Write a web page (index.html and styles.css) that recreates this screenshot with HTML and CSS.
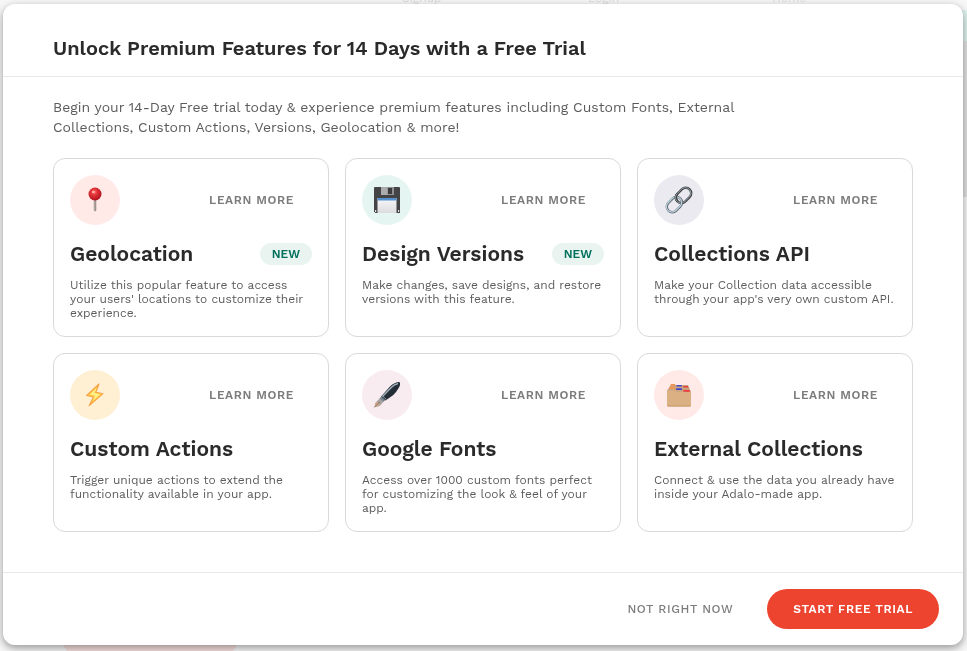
FILE: index.html
```html
<!DOCTYPE html>
<html lang="en">
<head>
<meta charset="utf-8">
<meta name="viewport" content="width=device-width, initial-scale=1">
<title>Free Trial</title>
<link rel="stylesheet" href="styles.css">
</head>
<body>
<div class="canvas" aria-hidden="true">
  <span class="screen-name screen-signup">Signup</span>
  <span class="screen-name screen-login">Login</span>
  <span class="screen-name screen-home">Home</span>
  <span class="canvas-mint"></span>
  <span class="canvas-side"></span>
  <span class="canvas-pill"></span>
</div>
<main class="modal" role="dialog" aria-labelledby="modal-title">
  <header class="modal-header">
    <h1 id="modal-title">Unlock Premium Features for 14 Days with a Free Trial</h1>
  </header>
  <div class="modal-body">
    <p class="intro">Begin your 14-Day Free trial today &amp; experience premium features including Custom Fonts, External Collections, Custom Actions, Versions, Geolocation &amp; more!</p>
    <div class="cards">
      <article class="card">
        <div class="card-top">
          <span class="icon icon-red">
            <svg viewBox="0 0 30 30" aria-hidden="true">
              <defs>
                <radialGradient id="ball" cx=".42" cy=".35" r=".65"><stop offset="0" stop-color="#ff8078"/><stop offset=".35" stop-color="#e4363b"/><stop offset="1" stop-color="#ae101c"/></radialGradient>
                <linearGradient id="needle"><stop offset="0" stop-color="#8a827e"/><stop offset=".45" stop-color="#c4bab3"/><stop offset="1" stop-color="#6d6562"/></linearGradient>
              </defs>
              <path d="M13.8 14h2.4v11.5l-.6.7h-1.2l-.6-.7z" fill="url(#needle)"/>
              <circle cx="15" cy="9" r="6.5" fill="url(#ball)"/>
              <ellipse cx="13.4" cy="7" rx="1.6" ry="1" fill="#ffb4ae"/>
            </svg>
          </span>
          <a class="learn" href="#">LEARN MORE</a>
        </div>
        <div class="card-title"><h2>Geolocation</h2><span class="badge">NEW</span></div>
        <p>Utilize this popular feature to access your users' locations to customize their experience.</p>
      </article>
      <article class="card">
        <div class="card-top">
          <span class="icon icon-mint">
            <svg viewBox="0 0 30 30" aria-hidden="true">
              <defs><linearGradient id="label" x2="0" y2="1"><stop offset="0" stop-color="#f8f8fa"/><stop offset="1" stop-color="#dcdcdf"/></linearGradient></defs>
              <path d="M2 2.5l.5-.5h25l.5.5V28H3.500L2 26.500z" fill="#444446"/>
              <path d="M9 2h13v8H9z" fill="#8e9092"/>
              <path d="M9 2h6.500v8H9z" fill="#a9abac"/>
              <path d="M16 3h4v6h-4z" fill="#3b3b3e"/>
              <path d="M5.500 13h19v15h-19z" fill="url(#label)"/>
              <path d="M5.500 13h19v2.500h-19z" fill="#5591ce"/>
              <path d="M3 25h1.200v2H3zM26 25h1.200v2H26z" fill="#ddd"/>
            </svg>
          </span>
          <a class="learn" href="#">LEARN MORE</a>
        </div>
        <div class="card-title"><h2>Design Versions</h2><span class="badge">NEW</span></div>
        <p>Make changes, save designs, and restore versions with this feature.</p>
      </article>
      <article class="card">
        <div class="card-top">
          <span class="icon icon-gray">
            <svg viewBox="0 0 30 30" aria-hidden="true" fill="none">
              <g transform="rotate(-45 15 15)">
                <rect x="13" y="9.500" width="17" height="11" rx="5.500" stroke="#44413f" stroke-width="2.400"/>
                <rect x="12.800" y="9.200" width="17" height="11" rx="5.500" stroke="#8fa9bd" stroke-width=".9"/>
                <rect x="0" y="9.500" width="17" height="11" rx="5.500" stroke="#5f666c" stroke-width="2.400"/>
                <rect x="-.2" y="9.200" width="17" height="11" rx="5.500" stroke="#bdd2e1" stroke-width="1.200"/>
                <path d="M18.500 9.500q-5.500 0-5.500 5.500" stroke="#44413f" stroke-width="2.400"/>
                <path d="M18.500 9.200q-5.700 0-5.700 5.500" stroke="#8fa9bd" stroke-width=".8"/>
              </g>
            </svg>
          </span>
          <a class="learn" href="#">LEARN MORE</a>
        </div>
        <div class="card-title"><h2>Collections API</h2></div>
        <p>Make your Collection data accessible through your app's very own custom API.</p>
      </article>
      <article class="card">
        <div class="card-top">
          <span class="icon icon-yellow">
            <svg viewBox="0 0 30 30" aria-hidden="true">
              <path d="M19 4L6.700 15.500l6.800 1.500-4.300 8.700L23 13.700l-7.200-1.500z" fill="#ffd04a" stroke="#f7a043" stroke-width="1.100" stroke-linejoin="round"/>
              <path d="M17 7.500L10 14.600l5.200 1-2.400 5.200 7.200-6.600-5.700-1.200z" fill="#fff08c"/>
            </svg>
          </span>
          <a class="learn" href="#">LEARN MORE</a>
        </div>
        <div class="card-title"><h2>Custom Actions</h2></div>
        <p>Trigger unique actions to extend the functionality available in your app.</p>
      </article>
      <article class="card">
        <div class="card-top">
          <span class="icon icon-pink">
            <svg viewBox="0 0 30 30" aria-hidden="true">
              <path d="M2.500 27.300l.8-4.300 4.700-5 3.700 3.500-4 4.500z" fill="#a8a19d"/>
              <path d="M2.500 27.300l.8-4 2.500-1.600 2 3.800z" fill="#d3ab8c"/>
              <path d="M2.500 27.300L7.500 22" stroke="#6b5a50" stroke-width=".7"/>
              <path d="M7.700 18.300L10 15.500l4 4-2.600 2.300z" fill="#71818e"/>
              <path d="M9.300 16.200L18 6.500Q22.500 2 27.500 2q1.500 2-.8 6Q24.500 12 21 15.200L13.600 20.400z" fill="#242d35"/>
              <path d="M11 16L19.500 7.200q3-3 6-3.500" stroke="#a5b4bf" stroke-width="1.400" stroke-linecap="round" fill="none"/>
              <path d="M10 15.600l4.500 4" stroke="#a1afb8" stroke-width=".8"/>
            </svg>
          </span>
          <a class="learn" href="#">LEARN MORE</a>
        </div>
        <div class="card-title"><h2>Google Fonts</h2></div>
        <p>Access over 1000 custom fonts perfect for customizing the look &amp; feel of your app.</p>
      </article>
      <article class="card">
        <div class="card-top">
          <span class="icon icon-red">
            <svg viewBox="0 0 30 30" aria-hidden="true">
              <path d="M4 9.500L6.500 5H24l3 7v2H3v-4z" fill="#c9a47e"/>
              <path d="M7 4h4l.4 1.600H6.200z" fill="#f6924c"/>
              <path d="M5.600 7.200h5.600v1.800H5z" fill="#f6924c"/>
              <path d="M12.600 5h5.200v1.400h-5.400zM12.200 8.500H18V10h-6z" fill="#4548cc"/>
              <path d="M19.300 6H24l.5 1.500h-5.200zM19.500 10H25.500l.4 1.400h-6.400z" fill="#ed3b3e"/>
              <path d="M3 10.500h8.500l1 1.300H20l1 .4h6v13.600l-.8.800H3.800l-.8-.8z" fill="#dbb184"/>
              <path d="M12.300 8.500H18V10h-5.700z" fill="#4548cc"/>
              <path d="M19.500 10h6l.4 1.400h-6.400z" fill="#ed3b3e"/>
              <path d="M3 25.400h24v.4l-.8.800H3.800l-.8-.8z" fill="#c4986b"/>
            </svg>
          </span>
          <a class="learn" href="#">LEARN MORE</a>
        </div>
        <div class="card-title"><h2>External Collections</h2></div>
        <p>Connect &amp; use the data you already have inside your Adalo-made app.</p>
      </article>
    </div>
  </div>
  <footer class="modal-footer">
    <button class="btn btn-text" type="button">NOT RIGHT NOW</button>
    <button class="btn btn-primary" type="button">START FREE TRIAL</button>
  </footer>
</main>
</body>
</html>
```
FILE: styles.css
```css
* { box-sizing: border-box; }

body {
  margin: 0;
  padding: 4px 4px 6px 3px;
  background: #f7f7f7;
  color: #2a2a2a;
  font-family: "Work Sans", Inter, sans-serif;
}

h1, h2, p { margin: 0; }

.canvas {
  position: fixed;
  inset: 0;
  overflow: hidden;
  color: #dcdcdc;
  font-size: 12px;
  line-height: 16px;
}

.screen-name { position: absolute; top: -10px; }
.screen-signup { left: 402px; }
.screen-login { left: 588px; }
.screen-home { left: 772px; }

.canvas-mint {
  position: absolute;
  top: 10px;
  right: 0;
  width: 8px;
  height: 31px;
  background: #dff3ee;
}

.canvas-side {
  position: absolute;
  top: 41px;
  right: 0;
  width: 8px;
  height: 156px;
  background: #e2e2e2;
}

.canvas-pill {
  position: absolute;
  left: 62px;
  bottom: -8px;
  width: 176px;
  height: 44px;
  border-radius: 22px;
  background: #f8e2e0;
}

.modal {
  position: relative;
  background: #fff;
  border-radius: 12px;
  box-shadow: 0 3px 8px rgba(0, 0, 0, 0.4);
}

.modal-header {
  padding: 32px 50px 16px;
  border-bottom: 1px solid #e8e8e8;
}

.modal-header h1 {
  font-size: 20px;
  font-weight: 600;
  line-height: 24px;
}

.modal-body { padding: 20px 50px 40px; }

.intro {
  max-width: 700px;
  margin-bottom: 21px;
  color: #5c5c5c;
  font-size: 14px;
  line-height: 20px;
}

.cards {
  display: grid;
  grid-template-columns: repeat(3, 1fr);
  gap: 16px;
}

.card {
  padding: 16px;
  border: 1px solid #d9d9d9;
  border-radius: 12px;
}

.card-top {
  display: flex;
  align-items: center;
  justify-content: space-between;
  padding-right: 18px;
}

.icon {
  display: grid;
  place-items: center;
  width: 50px;
  height: 50px;
  border-radius: 50%;
}

.icon svg { width: 30px; height: 30px; }
.icon-red { background: #ffeae8; }
.icon-mint { background: #e5f5f1; }
.icon-gray { background: #ebeaf0; }
.icon-yellow { background: #fff0d4; }
.icon-pink { background: #f8ecf0; }

.learn {
  color: #7c7c7c;
  font-size: 12px;
  font-weight: 600;
  letter-spacing: 0.05em;
  line-height: 16px;
  text-decoration: none;
}

.card-title {
  display: flex;
  align-items: center;
  justify-content: space-between;
  margin: 16px 0 11px;
}

.card-title h2 {
  font-size: 21px;
  font-weight: 600;
  line-height: 26px;
}

.badge {
  padding: 3px 12px;
  border-radius: 11px;
  background: #e9f4f1;
  color: #00705d;
  font-size: 12px;
  font-weight: 600;
  line-height: 16px;
}

.card p {
  color: #5c5c5c;
  font-size: 12px;
  line-height: 14px;
}

.modal-footer {
  display: flex;
  align-items: center;
  justify-content: flex-end;
  gap: 8px;
  padding: 16px 24px;
  border-top: 1px solid #e8e8e8;
}

.btn {
  height: 40px;
  padding: 0 26px;
  border: 0;
  border-radius: 20px;
  font-family: inherit;
  font-size: 12px;
  font-weight: 600;
  letter-spacing: 0.05em;
  cursor: pointer;
}

.btn-text { background: transparent; color: #7c7c7c; font-weight: 500; }
.btn-primary { background: #ed4430; color: #fff; }
```
